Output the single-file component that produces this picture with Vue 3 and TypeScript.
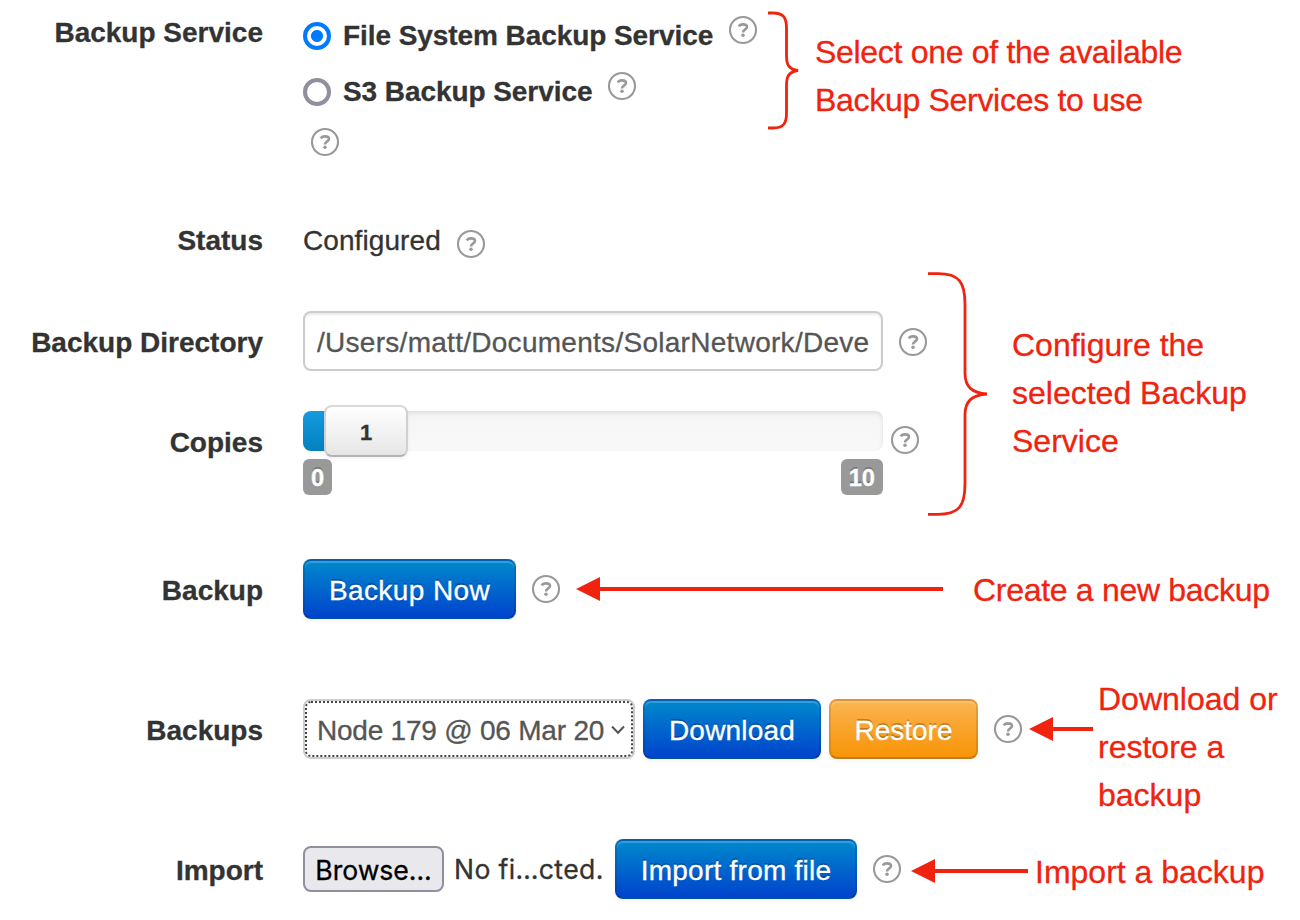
<script setup lang="ts">
import { defineComponent, h } from 'vue'

const directory = '/Users/matt/Documents/SolarNetwork/Deve'
const services = [
  { id: 'file', name: 'File System Backup Service', selected: true },
  { id: 's3', name: 'S3 Backup Service', selected: false },
]

const HelpIcon = defineComponent({
  render: () =>
    h('svg', { width: 30, height: 30, viewBox: '-15 -15 30 30', fill: 'none', stroke: '#999' }, [
      h('circle', { r: 13, 'stroke-width': 2.1 }),
      h('path', {
        d: 'M-4.1 -3.5C-3.5 -5 -2.2 -5.6 0 -5.6C2.6 -5.6 4 -4.6 4 -3C4 -0.5 0 -0.8 0 2.4',
        'stroke-width': 2.6,
      }),
      h('circle', { cy: 5.3, r: 1.75, fill: '#999', stroke: 'none' }),
    ]),
})
</script>

<template>
  <main class="page">
    <section class="row service-row">
      <div class="label">Backup Service</div>
      <div class="services">
        <label v-for="s in services" :key="s.id" class="service">
          <span class="radio" :class="{ on: s.selected }"></span>
          <span class="service-name">{{ s.name }}</span>
          <HelpIcon class="help" />
        </label>
        <HelpIcon class="help lone" />
      </div>
      <svg class="brace" width="32" height="122" viewBox="0 0 32 122">
        <path d="M0 3H5C15 3 18.5 7 18.5 18V46C18.5 55 21 59 30 60.5C21 62 18.5 66 18.5 75V103C18.5 114 15 118 5 118H0" />
      </svg>
      <p class="note n-select">Select one of the available<br />Backup Services to use</p>
    </section>

    <section class="row status-row">
      <div class="label">Status</div>
      <span class="status">Configured</span>
      <HelpIcon class="help" />
    </section>

    <section class="row config-row">
      <div class="settings">
        <div class="setting directory">
          <div class="label">Backup Directory</div>
          <div class="input"><span>{{ directory }}</span></div>
          <HelpIcon class="help" />
        </div>
        <div class="setting copies">
          <div class="label">Copies</div>
          <div class="slider">
            <div class="track">
              <div class="fill"></div>
              <div class="handle">1</div>
            </div>
            <div class="limits"><span>0</span><span>10</span></div>
          </div>
          <HelpIcon class="help" />
        </div>
      </div>
      <svg class="brace" width="62" height="246" viewBox="0 0 62 246">
        <path d="M0 3.7H10C31 3.7 37 12 37 34V103C37 117 44 123 59 124C44 125 37 131 37 145V214C37 236 31 244.3 10 244.3H0" />
      </svg>
      <p class="note n-config">Configure the<br />selected Backup<br />Service</p>
    </section>

    <section class="row action-row backup">
      <div class="label">Backup</div>
      <button class="btn b-now">Backup Now</button>
      <HelpIcon class="help" />
      <svg class="arrow" width="367" height="26" viewBox="0 0 367 26">
        <path d="M0 13L24 1V11H367V15H24V25Z" />
      </svg>
      <p class="note n-create">Create a new backup</p>
    </section>

    <section class="row action-row backups">
      <div class="label">Backups</div>
      <div class="select">
        <span>Node 179 @ 06 Mar 20</span>
        <svg width="14" height="10" viewBox="0 0 14 10"><path d="M1 1.5L7 7.7L13 1.5" /></svg>
      </div>
      <button class="btn b-download">Download</button>
      <button class="btn warning b-restore">Restore</button>
      <HelpIcon class="help" />
      <svg class="arrow" width="64" height="26" viewBox="0 0 64 26">
        <path d="M0 13L24 1V11H64V15H24V25Z" />
      </svg>
      <p class="note n-restore">Download or<br />restore a<br />backup</p>
    </section>

    <section class="row action-row import">
      <div class="label">Import</div>
      <div class="file">
        <span class="browse">Browse...</span>
        <span class="chosen">No fi…cted.</span>
      </div>
      <button class="btn b-import">Import from file</button>
      <HelpIcon class="help" />
      <svg class="arrow" width="117" height="26" viewBox="0 0 117 26">
        <path d="M0 13L24 1V11H117V15H24V25Z" />
      </svg>
      <p class="note n-import">Import a backup</p>
    </section>
  </main>
</template>

<style>
body {
  background: #fff;
}
</style>

<style scoped>
.page {
  width: 1300px;
  height: 920px;
  overflow: hidden;
  font: 28px/42px "Liberation Sans", Arial, sans-serif;
  color: #333;
  -webkit-text-stroke: 0.3px;
}
.page * {
  box-sizing: border-box;
  flex-shrink: 0;
}
.row,
.setting {
  display: flex;
  white-space: nowrap;
}
.label {
  width: 263px;
  margin-right: 40px;
  text-align: right;
  font-weight: bold;
}
.help {
  display: block;
}
.note {
  margin: 0;
  font-size: 32px;
  line-height: 48px;
  color: #f0230f;
}
.brace {
  fill: none;
  stroke: #f0230f;
  stroke-width: 2.8;
}
.arrow {
  fill: #f0230f;
}

.service-row {
  height: 212px;
}
.service-row > .label {
  padding-top: 12px;
}
.services {
  width: 465px;
  padding-top: 15px;
}
.service {
  display: flex;
  height: 56px;
}
.service .help {
  margin: -0.5px 0 0 15px;
}
.radio {
  width: 28px;
  height: 28px;
  margin: 7px 12px 0 0;
  border: 4px solid #8f8f9d;
  border-radius: 50%;
}
.radio.on {
  border-color: #007aff;
  background: radial-gradient(circle, #007aff 5.6px, #fff 6.4px);
}
.service-name {
  font-weight: bold;
  letter-spacing: -0.07px;
}
.lone {
  margin: -0.5px 0 0 7px;
}
.service-row .brace {
  margin-top: 10px;
}
.n-select {
  margin: 28px 0 0 15px;
  letter-spacing: -0.3px;
}

.status-row {
  height: 58px;
  padding-top: 8px;
}
.status {
  letter-spacing: 0.08px;
}
.status-row .help {
  margin: 8.5px 0 0 15.5px;
}

.config-row {
  height: 250px;
}
.settings {
  width: 928px;
  padding-top: 41px;
}
.directory {
  height: 100px;
}
.directory .label {
  padding-top: 11px;
}
.input {
  width: 580px;
  height: 60px;
  padding: 9px 12px;
  border: 2px solid #ccc;
  border-radius: 8px;
  color: #555;
  letter-spacing: 0.28px;
  box-shadow: inset 0 2px 2px rgba(0, 0, 0, 0.075);
}
.input span {
  display: block;
  overflow: hidden;
}
.directory .help {
  margin: 15.5px 0 0 14.5px;
}
.copies .label {
  padding-top: 11px;
}
.copies .help {
  margin: 13.5px 0 0 7px;
}
.slider {
  width: 580px;
}
.track {
  display: flex;
  height: 40px;
  border-radius: 8px;
  background: linear-gradient(#f5f5f5, #f9f9f9);
  box-shadow: inset 0 2px 4px rgba(0, 0, 0, 0.1);
}
.fill {
  width: 30px;
  border-radius: 8px 0 0 8px;
  background: linear-gradient(#149bdf, #0480be);
}
.handle {
  width: 84px;
  height: 52px;
  margin: -6px 0 0 -9px;
  border: 2px solid;
  border-color: #d9d9d9 #d0d0d0 #b3b3b3;
  border-radius: 8px;
  background: linear-gradient(#fff, #e6e6e6);
  box-shadow: 0 2px 4px rgba(0, 0, 0, 0.05);
  font-size: 22px;
  line-height: 51px;
  font-weight: bold;
  text-align: center;
}
.limits {
  display: flex;
  justify-content: space-between;
  margin-top: 8px;
}
.limits span {
  height: 36px;
  padding: 0 8px;
  border-radius: 6px;
  background: #999;
  color: #fff;
  font-size: 23.7px;
  line-height: 38px;
  font-weight: bold;
  text-shadow: 0 -2px 0 rgba(0, 0, 0, 0.25);
}
.n-config {
  margin: 51px 0 0 22px;
}

.action-row {
  height: 138px;
  align-items: center;
}
.backups {
  height: 142px;
}
.action-row .label {
  padding-top: 3px;
}
.btn {
  height: 60px;
  margin: 0;
  padding: 4px 0 0;
  border: 2px solid;
  border-color: rgba(0, 0, 0, 0.1) rgba(0, 0, 0, 0.1) rgba(0, 0, 0, 0.25);
  border-radius: 8px;
  background: #006dcc linear-gradient(#08c, #04c) repeat-x;
  box-shadow: inset 0 2px 0 rgba(255, 255, 255, 0.2), 0 2px 4px rgba(0, 0, 0, 0.05);
  color: #fff;
  font: 28px/40px "Liberation Sans", Arial, sans-serif;
  text-align: center;
  text-shadow: 0 -2px 0 rgba(0, 0, 0, 0.25);
}
.btn.warning {
  background: #faa732 linear-gradient(#fbb450, #f89406) repeat-x;
}
.action-row .help {
  margin: 0.5px 0 0 15px;
}
.b-now {
  width: 213px;
  letter-spacing: 0.4px;
}
.backup .arrow {
  margin-left: 15px;
}
.n-create {
  margin: 2px 0 0 30px;
  letter-spacing: -0.3px;
}
.select {
  display: flex;
  align-items: center;
  width: 332px;
  height: 60px;
  margin-right: 8px;
  padding: 3px 0 0 12px;
  border: 2px solid #ccc;
  border-radius: 8px;
  outline: 2px dotted #444;
  outline-offset: -4px;
  color: #555;
}
.select span {
  width: 294px;
  letter-spacing: -0.22px;
}
.select svg {
  margin-top: -2px;
  fill: none;
  stroke: #555;
  stroke-width: 2;
}
.b-download {
  width: 178px;
  margin-right: 8px;
  letter-spacing: 0.2px;
}
.b-restore {
  width: 149px;
}
.backups .arrow {
  margin-left: 6px;
}
.n-restore {
  margin: 36px 0 0 5px;
}
.file {
  display: flex;
  align-items: center;
  width: 312px;
  font: 26.6px/40px Inter, sans-serif;
}
.browse {
  width: 141px;
  height: 46px;
  margin-right: 10px;
  border: 2px solid #8f8f9d;
  border-radius: 8px;
  background: #e9e9ed;
  color: #000;
  line-height: 44px;
  text-align: center;
  letter-spacing: -0.05px;
}
.chosen {
  letter-spacing: 0.35px;
}
.b-import {
  width: 242px;
  letter-spacing: 0.25px;
}
.import .arrow {
  margin: 4px 0 0 9px;
}
.n-import {
  margin: 5px 0 0 7px;
}
</style>
